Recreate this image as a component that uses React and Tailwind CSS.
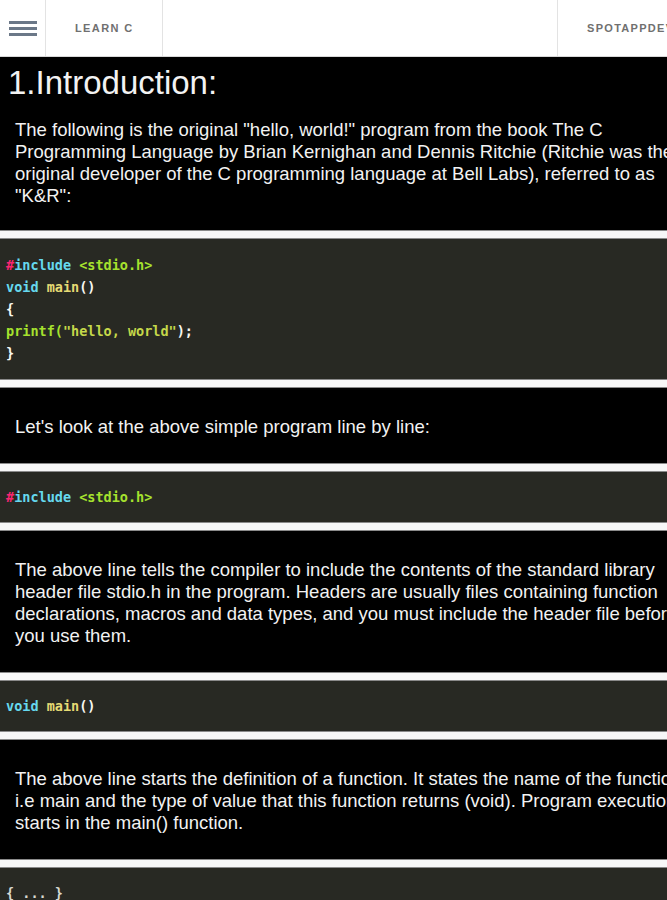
import React from 'react';

const sans = { fontFamily: '"Liberation Sans", Arial, sans-serif' };

function Line({ children }) {
  return <span className="block whitespace-nowrap">{children}</span>;
}

function TextBlock({ lines }) {
  return (
    <div className="bg-black border-y border-[#8a8a8a] pt-[28px] pb-[25px] px-[15px] text-[18.5px] leading-[22px] text-[#f2f2f2]">
      <p>
        {lines.map((l, i) => (
          <Line key={i}>{l}</Line>
        ))}
      </p>
    </div>
  );
}

function CodeBlock({ children, pad = 'py-[14px]' }) {
  return (
    <div className={`bg-[#282923] border-y border-[#8a8a8a] ${pad} px-[6px]`}>
      <pre className="font-['DejaVu_Sans_Mono',monospace] font-bold text-[13.5px] leading-[22px] text-[#f8f8f2]">
        {children}
      </pre>
    </div>
  );
}

const Hash = () => <span className="text-[#f92672]">#</span>;
const Inc = () => (
  <>
    <Hash />
    <span className="text-[#66d9ef]">include</span> <span className="text-[#a6e22e]">&lt;stdio.h&gt;</span>
  </>
);
const VoidMain = () => (
  <>
    <span className="text-[#66d9ef]">void</span> <span className="text-[#e6db74]">main</span>()
  </>
);

export default function App() {
  return (
    <div className="w-full overflow-hidden bg-[#f7f7f7]" style={sans}>
      <div className="w-[760px]">
        {/* top bar */}
        <header className="h-[57px] bg-white border-b border-[#d8d8d8] flex items-stretch">
          <button className="w-[46px] flex items-center justify-center border-r border-[#e3e3e3]">
            <span className="flex flex-col gap-[3px]">
              <span className="block w-[28px] h-[3px] bg-[#6b7888]" />
              <span className="block w-[28px] h-[3px] bg-[#6b7888]" />
              <span className="block w-[28px] h-[3px] bg-[#6b7888]" />
            </span>
          </button>
          <div className="w-[117px] flex items-center pl-[29px] border-r border-[#e3e3e3] text-[11px] font-bold tracking-[1.4px] text-[#707070]">
            LEARN C
          </div>
          <div className="w-[394px]" />
          <div className="flex-1 flex items-center pl-[29px] border-l border-[#e3e3e3] text-[11px] font-bold tracking-[1.3px] text-[#707070]">
            SPOTAPPDEV
          </div>
        </header>

        <div className="flex flex-col gap-[7px] bg-[#f7f7f7]">
          <div className="bg-black border-b border-[#8a8a8a] pt-[8px] pb-[23px] text-[#f2f2f2]">
            <h1 className="px-[8px] text-[33px] leading-[36px]">1.Introduction:</h1>
            <p className="mt-[18px] px-[15px] text-[18.5px] leading-[22px]">
              <Line>The following is the original "hello, world!" program from the book The C</Line>
              <Line>Programming Language by Brian Kernighan and Dennis Ritchie (Ritchie was the</Line>
              <Line>original developer of the C programming language at Bell Labs), referred to as</Line>
              <Line>"K&amp;R":</Line>
            </p>
          </div>

          <CodeBlock pad="py-[15px]">
            <Line><Inc /></Line>
            <Line><VoidMain /></Line>
            <Line>{'{'}</Line>
            <Line><span className="text-[#a6e22e]">printf(</span><span className="text-[#c5d84a]">"hello, world"</span>);</Line>
            <Line>{'}'}</Line>
          </CodeBlock>

          <TextBlock lines={["Let's look at the above simple program line by line:"]} />

          <CodeBlock>
            <Line><Inc /></Line>
          </CodeBlock>

          <TextBlock
            lines={[
              'The above line tells the compiler to include the contents of the standard library',
              'header file stdio.h in the program. Headers are usually files containing function',
              'declarations, macros and data types, and you must include the header file before',
              'you use them.',
            ]}
          />

          <CodeBlock>
            <Line><VoidMain /></Line>
          </CodeBlock>

          <TextBlock
            lines={[
              'The above line starts the definition of a function. It states the name of the function',
              'i.e main and the type of value that this function returns (void). Program execution',
              'starts in the main() function.',
            ]}
          />

          <CodeBlock>
            <Line><span className="text-[#d8d8d0]">{'{ ... }'}</span></Line>
            <Line>&nbsp;</Line>
          </CodeBlock>
        </div>
      </div>
    </div>
  );
}
